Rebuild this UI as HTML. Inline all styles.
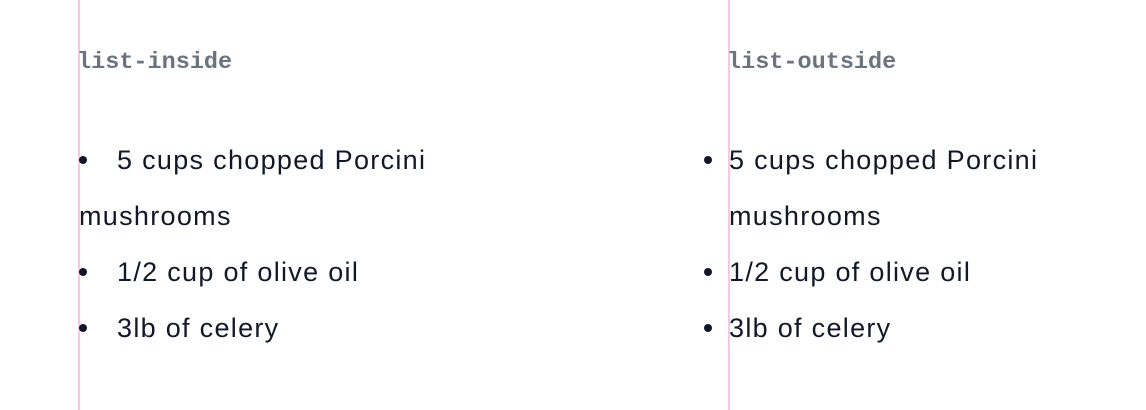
<!DOCTYPE html>
<html><head><style>
html,body{margin:0;padding:0;background:#fff;width:1146px;height:410px;overflow:hidden;position:relative}
.line{position:absolute;top:0;width:2px;height:410px;background:#f9c6e3}
.lbl{position:absolute;top:47px;font:bold 23.5px/32px "Liberation Mono",monospace;color:#6b7280}
.it{position:absolute;font:27px/56px "Liberation Sans",sans-serif;letter-spacing:1.3px;color:#111827;white-space:nowrap}
.b{position:absolute;width:8px;height:8px;border-radius:50%;background:#111827}
</style></head><body>
<div class="line" style="left:78px"></div>
<div class="line" style="left:728px"></div>
<div class="lbl" style="left:77px">list-inside</div>
<div class="lbl" style="left:727px">list-outside</div>

<div class="b" style="left:79px;top:156px"></div>
<div class="it" style="left:117px;top:132px">5 cups chopped Porcini</div>
<div class="it" style="left:79px;top:188px">mushrooms</div>
<div class="b" style="left:79px;top:268px"></div>
<div class="it" style="left:117px;top:244px">1/2 cup of olive oil</div>
<div class="b" style="left:79px;top:324px"></div>
<div class="it" style="left:117px;top:300px">3lb of celery</div>

<div class="b" style="left:704px;top:156px"></div>
<div class="it" style="left:729px;top:132px">5 cups chopped Porcini</div>
<div class="it" style="left:729px;top:188px">mushrooms</div>
<div class="b" style="left:704px;top:268px"></div>
<div class="it" style="left:729px;top:244px">1/2 cup of olive oil</div>
<div class="b" style="left:704px;top:324px"></div>
<div class="it" style="left:729px;top:300px">3lb of celery</div>
</body></html>
